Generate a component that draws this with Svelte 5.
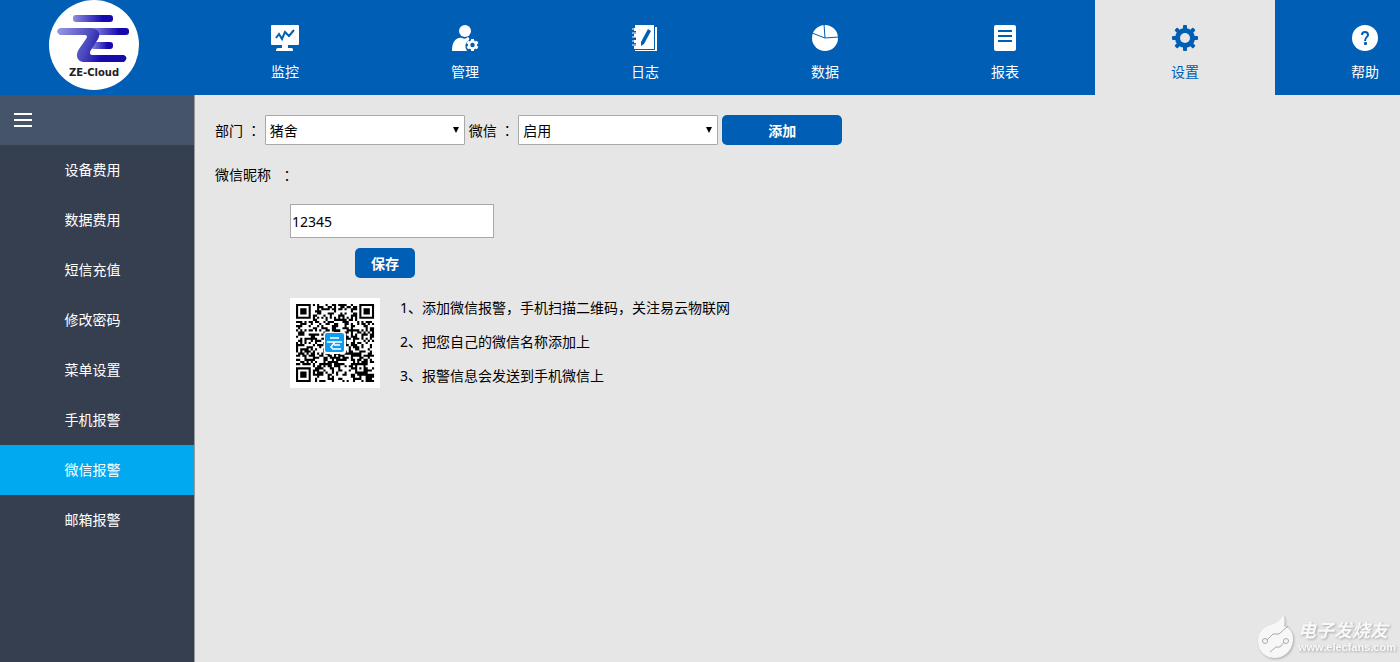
<script>
  let menus = ['设备费用', '数据费用', '短信充值', '修改密码', '菜单设置', '手机报警', '微信报警', '邮箱报警'];
  let tabs = [
    { name: '监控', icon: 'monitor' },
    { name: '管理', icon: 'user' },
    { name: '日志', icon: 'log' },
    { name: '数据', icon: 'pie' },
    { name: '报表', icon: 'report' },
    { name: '设置', icon: 'gear' },
    { name: '帮助', icon: 'help' }
  ];
  let tips = [
    '1、添加微信报警，手机扫描二维码，关注易云物联网',
    '2、把您自己的微信名称添加上',
    '3、报警信息会发送到手机微信上'
  ];

  let activeTab = '设置';
  let activeMenu = '微信报警';
  let showMenu = true;
  let department = '猪舍';
  let wechat = '启用';
  let nickname = '12345';

  const teeth = [0, 45, 90, 135, 180, 225, 270, 315];

  // QR code modules, 37 x 37
  const size = 37;

  // square rings: returns true/false inside the ring pattern, null outside of it
  function ring(x, y, cx, cy, radius) {
    const d = Math.max(Math.abs(x - cx), Math.abs(y - cy));
    if (d > radius) return null;
    if (radius === 4) return d !== 4 && d !== 2;
    return d !== 1;
  }

  function buildCode() {
    let path = '';
    let seed = 20177;
    for (let y = 0; y < size; y++) {
      for (let x = 0; x < size; x++) {
        seed = (seed * 1103515245 + 12345) % 2147483648;
        let on = ((seed >> 12) & 15) < 8;
        if (x === 6 || y === 6) on = (x + y) % 2 === 0;
        for (const fixed of [ring(x, y, 3, 3, 4), ring(x, y, 33, 3, 4), ring(x, y, 3, 33, 4), ring(x, y, 30, 30, 2)]) {
          if (fixed !== null) on = fixed;
        }
        if (on) path += `M${x} ${y}h1v1h-1z`;
      }
    }
    return path;
  }

  const code = buildCode();
</script>

<div class="page">
  <header>
    <a class="logo" href="#home" aria-label="ZE-Cloud">
      <svg viewBox="0 0 90 90" width="90" height="90">
        <defs>
          <linearGradient id="bar" x1="0" x2="1">
            <stop offset="0" stop-color="#8e8de0" />
            <stop offset="0.75" stop-color="#1508ae" />
          </linearGradient>
          <linearGradient id="stem" gradientUnits="userSpaceOnUse" x1="8" y1="30" x2="56" y2="46">
            <stop offset="0" stop-color="#9998e4" />
            <stop offset="0.65" stop-color="#4b49bd" />
            <stop offset="1" stop-color="#170bad" />
          </linearGradient>
        </defs>
        <circle cx="45" cy="45" r="45" fill="#fff" />
        <rect x="24" y="15" width="40" height="7" rx="3" fill="url(#bar)" />
        <rect x="42" y="28" width="38" height="7" rx="3" fill="url(#bar)" />
        <rect x="42" y="42" width="22" height="7" rx="3" fill="url(#bar)" />
        <path d="M11 28H42C50 29 52 34 49 39L42 50C40 53 41 55 44 55H75Q80 58 75 62H34C28 61 26 55 30 49L37 39C39 36 38 35 35 35H11Q5 31 11 28Z" fill="url(#stem)" />
        <text x="45" y="76" text-anchor="middle">ZE-Cloud</text>
      </svg>
    </a>

    <nav>
      {#each tabs as tab (tab.name)}
        <a href="#{tab.icon}" class:active={activeTab === tab.name} on:click|preventDefault={() => (activeTab = tab.name)}>
          <svg viewBox="0 0 30 30" width="30" height="30" fill="currentColor">
            {#if tab.icon === 'monitor'}
              <path d="M1 3Q1 2 2 2H28Q29 2 29 3V21Q29 22 28 22H18V25H22Q23 25 23 28H6Q6 25 8 25H12V22H2Q1 22 1 21Z" />
              <path class="cut" d="M6 15L9 11L12 16L15 9L19 13L24 7" />
            {:else if tab.icon === 'user'}
              <circle cx="15" cy="8" r="6" />
              <path d="M2 28C2 19 6 14 12 15Q15 17 18 14Q20 15 19 17Q13 21 17 28Z" />
              <g transform="translate(22.5 22)">
                {#each [0, 60, 120, 180, 240, 300] as angle}
                  <rect x="-1.5" y="-6" width="3" height="4" transform="rotate({angle})" />
                {/each}
                <circle r="4.7" />
                <circle class="hole" r="2.2" />
              </g>
            {:else if tab.icon === 'log'}
              <path d="M5 2H24V26H4V23H6V20H4V17H6V14H4V11H6V8H4V5H5Z" />
              <path d="M25 4H27V28H5V27H25Z" />
              <path d="M2 6H6M2 10H6M2 14H6M2 18H6M2 22H6" stroke="currentColor" />
              <path class="hole" d="M18 6L21 8L14 21L11 23L11 19Z" />
            {:else if tab.icon === 'pie'}
              <circle cx="15" cy="15" r="13" />
              <path class="slice" d="M2 10L15 15L14 1M15 15L29 14" />
            {:else if tab.icon === 'report'}
              <rect x="4" y="2" width="22" height="26" rx="2" />
              <path class="cut" d="M8 8H22M8 13H22M8 18H22" />
            {:else if tab.icon === 'gear'}
              <g transform="translate(15 15)">
                {#each teeth as angle}
                  <rect x="-2" y="-13" width="4" height="6" rx="1" transform="rotate({angle})" />
                {/each}
                <circle r="10" />
                <circle class="hole" r="5" />
              </g>
            {:else}
              <circle cx="15" cy="15" r="13" />
              <path class="cut mark" d="M12 12C12 8 18 8 18 12C18 14 15 14 15 18" />
              <rect class="hole" x="14" y="19" width="3" height="3" rx="1" />
            {/if}
          </svg>
          <span>{tab.name}</span>
        </a>
      {/each}
    </nav>
  </header>

  <div class="body">
    <aside>
      <button class="toggle" aria-label="菜单" on:click={() => (showMenu = !showMenu)}>
        <svg viewBox="0 0 18 14" width="18" height="14"><path d="M0 1H18M0 7H18M0 13H18" stroke="#fff" stroke-width="2" /></svg>
      </button>
      {#if showMenu}
        {#each menus as menu (menu)}
          <a href="#{menu}" class:active={activeMenu === menu} on:click|preventDefault={() => (activeMenu = menu)}>{menu}</a>
        {/each}
      {/if}
    </aside>

    <main>
      <div class="filters">
        <label for="department">部门 <span class="colon">：</span></label>
        <div class="select">
          <select id="department" bind:value={department}>
            <option>猪舍</option>
          </select>
        </div>
        <label for="wechat">微信 <span class="colon">：</span></label>
        <div class="select">
          <select id="wechat" bind:value={wechat}>
            <option>启用</option>
            <option>停用</option>
          </select>
        </div>
        <button class="btn add">添加</button>
      </div>

      <label class="nickname" for="nickname">微信昵称<span class="colon">：</span></label>

      <form on:submit|preventDefault>
        <input id="nickname" type="text" bind:value={nickname} />
        <button class="btn save">保存</button>
      </form>

      <div class="follow">
        <svg class="qrcode" viewBox="0 0 90 90" width="90" height="90" role="img" aria-label="二维码">
          <rect width="90" height="90" fill="#fff" />
          <g transform="translate(6 6) scale(2.11)">
            <path d={code} />
          </g>
          <rect x="34" y="34" width="22" height="22" rx="2" fill="#fff" />
          <rect x="35" y="35" width="19" height="19" rx="2" fill="#0d9cf0" />
          <path d="M40 40H49M37 44H52M44 47H50M42 51H51M45 44L41 49L43 51" fill="none" stroke="#fff" stroke-width="1.5" />
        </svg>
        <div class="tips">
          {#each tips as tip}
            <p>{tip}</p>
          {/each}
        </div>
      </div>
    </main>
  </div>

  <div class="watermark">
    <svg viewBox="0 0 40 46" width="40" height="46">
      <path d="M27 1C29 5 29 9 28 12C34 14 38 20 37 27C36 37 28 44 19 44C9 44 2 37 2 27C2 18 8 13 14 11C20 9 25 7 27 1Z" fill="#f7f7f7" />
      <path d="M11 26L17 20H23L32 12M14 38L20 33H24L28 28" fill="none" stroke="#aaa" />
      <circle cx="9" cy="27" r="2.5" fill="#f7f7f7" stroke="#aaa" />
      <circle cx="30" cy="27" r="2.5" fill="#f7f7f7" stroke="#aaa" />
    </svg>
    <div>
      <div class="brand">电子发烧友</div>
      <div class="site">www.elecfans.com</div>
    </div>
  </div>
</div>

<style>
  :global(body) {
    margin: 0;
  }
  .page {
    position: relative;
    display: flex;
    flex-direction: column;
    min-height: 100vh;
    overflow: hidden;
    background: #e6e6e6;
    color: #000;
    font-family: "Noto Sans", "Noto Sans CJK SC", sans-serif;
    font-size: 14px;
  }
  a {
    color: #fff;
    text-decoration: none;
  }
  header {
    display: flex;
    height: 95px;
    background: #005eb5;
  }
  .logo {
    flex: none;
    box-sizing: border-box;
    width: 195px;
    padding-left: 49px;
  }
  .logo text {
    font: bold 10px "DejaVu Sans", sans-serif;
    fill: #222;
  }
  nav {
    display: flex;
    flex: 1;
    min-width: 0;
    overflow: hidden;
  }
  nav a {
    --back: #005eb5;
    display: flex;
    flex: none;
    flex-direction: column;
    align-items: center;
    gap: 8px;
    box-sizing: border-box;
    width: 180px;
    padding-top: 23px;
    background: var(--back);
    line-height: 22px;
  }
  nav a.active {
    --back: #e6e6e6;
    color: #005eb5;
  }
  .hole {
    fill: var(--back);
  }
  .cut,
  .slice {
    fill: none;
    stroke: var(--back);
    stroke-width: 2;
  }
  .slice {
    stroke-width: 1;
  }
  .body {
    display: flex;
    flex: 1;
  }
  aside {
    flex: none;
    display: flex;
    flex-direction: column;
    width: 194px;
    background: #363f50;
    border-right: 1px solid #999;
  }
  aside a {
    padding-right: 9px;
    line-height: 50px;
    text-align: center;
  }
  aside a.active {
    background: #00a9f0;
  }
  .toggle {
    display: flex;
    align-items: center;
    height: 50px;
    padding: 0 14px;
    border: 0;
    background: #465469;
    cursor: pointer;
  }
  main {
    flex: 1;
    padding: 20px;
  }
  .filters {
    display: flex;
    align-items: center;
    gap: 4px;
  }
  .colon {
    font-family: "Noto Sans CJK TC", sans-serif;
  }
  .select {
    position: relative;
  }
  .select::after {
    position: absolute;
    top: 12px;
    right: 6px;
    border: solid transparent;
    border-width: 6px 3px 0;
    border-top-color: #000;
    content: "";
    pointer-events: none;
  }
  select,
  input {
    box-sizing: border-box;
    border: 1px solid #a9a9a9;
    background: #fff;
    color: #000;
    font: inherit;
  }
  select {
    display: block;
    width: 200px;
    height: 30px;
    padding: 0 4px;
    border-radius: 1px;
    appearance: none;
  }
  .btn {
    height: 30px;
    padding: 0;
    border: 0;
    border-radius: 5px;
    background: #005eb5;
    color: #fff;
    font: inherit;
    font-weight: bold;
    cursor: pointer;
  }
  .add {
    width: 120px;
  }
  .nickname {
    display: flex;
    gap: 9px;
    margin-top: 20px;
    line-height: 20px;
  }
  form {
    display: flex;
    flex-direction: column;
    align-items: flex-start;
    gap: 10px;
    margin: 19px 0 20px 75px;
  }
  input {
    width: 204px;
    height: 34px;
    padding: 1px;
  }
  .save {
    width: 60px;
    margin-left: 65px;
  }
  .follow {
    display: flex;
    gap: 20px;
    margin-left: 75px;
  }
  .tips p {
    margin: 0 0 14px;
    line-height: 20px;
  }
  .watermark {
    position: absolute;
    right: 4px;
    bottom: 2px;
    display: flex;
    align-items: center;
    gap: 2px;
    color: #f8f8f8;
    filter: drop-shadow(1px 1px 1px #aaa);
  }
  .brand {
    font-size: 18px;
    font-style: italic;
    font-weight: bold;
    line-height: 20px;
  }
  .site {
    font: bold 11px/14px "Liberation Sans", sans-serif;
  }
</style>
